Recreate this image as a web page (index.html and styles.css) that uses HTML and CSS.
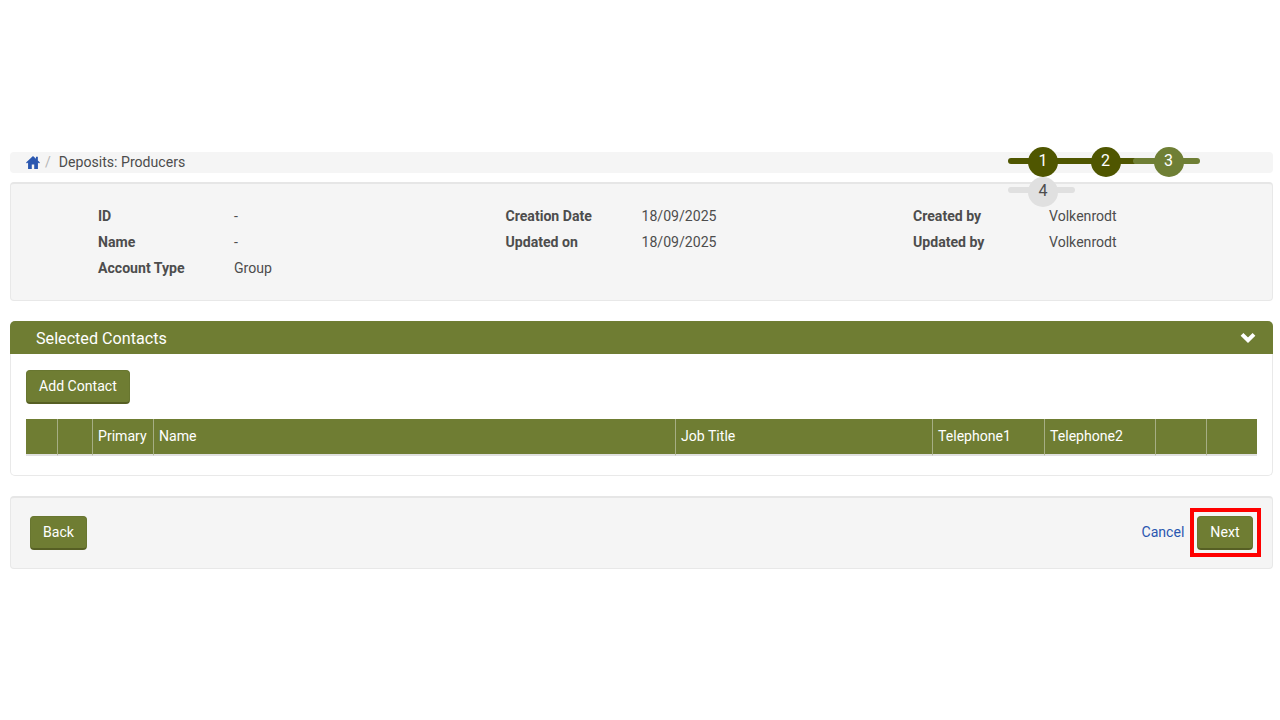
FILE: index.html
```html
<!DOCTYPE html>
<html lang="en">
<head>
<meta charset="utf-8">
<title>Deposits: Producers</title>
<link rel="stylesheet" href="styles.css">
</head>
<body>
<main class="page">
  <nav class="crumbs">
    <svg class="home" viewBox="0 0 16 15" width="14" height="13"><path d="M8 0 0 7.4 1 8.6 2.3 7.4V15h4.3V9.8h2.8V15h4.3V7.4L15 8.6l1-1.2-2.4-2.2V1h-2.2v2.2z"/></svg>
    <span class="sep">/</span>
    <span class="crumb">Deposits: Producers</span>
  </nav>
  <ol class="stepper">
    <li class="step done first"><span class="dot">1</span></li>
    <li class="step done second"><span class="dot">2</span></li>
    <li class="step active third"><span class="dot">3</span></li>
    <li class="step todo first"><span class="dot">4</span></li>
  </ol>

  <section class="well info">
    <dl class="info-col">
      <div class="row"><dt>ID</dt><dd>-</dd></div>
      <div class="row"><dt>Name</dt><dd>-</dd></div>
      <div class="row"><dt>Account Type</dt><dd>Group</dd></div>
    </dl>
    <dl class="info-col">
      <div class="row"><dt>Creation Date</dt><dd>18/09/2025</dd></div>
      <div class="row"><dt>Updated on</dt><dd>18/09/2025</dd></div>
    </dl>
    <dl class="info-col">
      <div class="row"><dt>Created by</dt><dd>Volkenrodt</dd></div>
      <div class="row"><dt>Updated by</dt><dd>Volkenrodt</dd></div>
    </dl>
  </section>

  <section class="panel">
    <header class="panel-head">
      <h2>Selected Contacts</h2>
      <svg class="chev" viewBox="0 0 16 11" width="16" height="11"><path d="M2 2.4 8 8.2 14 2.4" fill="none" stroke="#fff" stroke-width="4"/></svg>
    </header>
    <div class="panel-body">
      <button class="btn" type="button">Add Contact</button>
      <table class="grid">
        <colgroup>
          <col class="c1"><col class="c2"><col class="c3"><col class="c4"><col class="c5"><col class="c6"><col class="c7"><col class="c8"><col class="c9">
        </colgroup>
        <thead>
          <tr><th></th><th></th><th>Primary</th><th>Name</th><th>Job Title</th><th>Telephone1</th><th>Telephone2</th><th></th><th></th></tr>
        </thead>
      </table>
    </div>
  </section>

  <footer class="well actions">
    <button class="btn" type="button">Back</button>
    <div class="actions-right">
      <a class="cancel" href="#">Cancel</a>
      <button class="btn highlighted" type="button">Next</button>
    </div>
  </footer>
</main>
</body>
</html>
```
FILE: styles.css
```css
* { box-sizing: border-box; }
html, body { margin: 0; padding: 0; background: #fff; }
body {
  font-family: Roboto, "Liberation Sans", sans-serif;
  font-size: 14.1px;
  line-height: 20px;
  color: #4d4d4d;
}
.page {
  position: relative;
  width: 1280px;
  height: 720px;
  padding: 152px 7px 0 10px;
}
.crumbs {
  display: flex;
  align-items: center;
  height: 21px;
  padding: 0 0 1px 16px;
  background: #f5f5f5;
  border-radius: 4px;
}
.home { fill: #2a57b0; }
.sep { margin-left: 5px; color: #b5b5b5; }
.crumb { margin-left: 8px; }

.stepper {
  position: absolute;
  left: 1008px;
  top: 147px;
  width: 200px;
  margin: 0;
  padding: 0;
  list-style: none;
  display: flex;
  flex-wrap: wrap;
  z-index: 2;
}
.step {
  position: relative;
  height: 30px;
}
.step.first { width: 67px; padding-left: 20px; }
.step.second { width: 62px; padding-left: 15.5px; }
.step.third { width: 63px; padding-left: 16.5px; }
.step::before {
  content: "";
  position: absolute;
  left: 0;
  right: 0;
  top: 10.5px;
  height: 6px;
  border-radius: 3px;
  background: #4f5600;
}
.step.second::before { left: -8px; }
.step.active::before { left: -4px; background: #6f7f35; }
.step.todo::before { background: #e0e0e0; top: 10px; height: 5.5px; }
.dot {
  position: relative;
  display: block;
  width: 30px;
  height: 30px;
  border-radius: 50%;
  text-align: center;
  font-size: 16px;
  line-height: 28px;
  color: #fff;
}
.done .dot { background: #4f5600; }
.active .dot { background: #6f7f35; }
.todo .dot { background: #e0e0e0; color: #4d4d4d; }

.well {
  background: #f5f5f5;
  border: 1px solid #e8e8e8;
  border-top: 2px solid #e6e6e6;
  border-radius: 4px;
}
.info {
  display: flex;
  height: 119px;
  margin-top: 9px;
  padding: 19px 0 0 87px;
}
.info-col { flex: 0 0 407.5px; margin: 0; }
.row { display: flex; height: 26px; align-items: center; }
.row dt { width: 136px; font-weight: 700; }
.row dd { margin: 0; }

.panel {
  height: 155px;
  margin-top: 20px;
  border: 1px solid #e9e9e9;
  border-top: 0;
  border-radius: 5px;
}
.panel-head {
  display: flex;
  justify-content: space-between;
  align-items: center;
  height: 33px;
  margin: 0 -1px;
  padding: 2px 17px 0 26px;
  background: #6f7d33;
  border-radius: 5px 5px 0 0;
  color: #fff;
}
.panel-head h2 { margin: 0; font-size: 16.15px; font-weight: 400; }
.chev { margin-top: -3px; }
.panel-body { padding: 16px 15px 0; }

.btn {
  display: block;
  height: 33.5px;
  padding: 0 12px 1px;
  font: 400 14.1px/20px Roboto, "Liberation Sans", sans-serif;
  color: #fff;
  background: #6f7d33;
  border: 1px solid #687630;
  border-bottom: 2px solid #565f24;
  border-radius: 4px;
}
.grid {
  width: 1231px;
  margin-top: 15.5px;
  border-collapse: separate;
  border-spacing: 0;
  table-layout: fixed;
}
.c1 { width: 31px; }
.c2 { width: 35px; }
.c3 { width: 61px; }
.c4 { width: 522px; }
.c5 { width: 257px; }
.c6 { width: 112px; }
.c7 { width: 111px; }
.c8 { width: 51px; }
.c9 { width: 51px; }
.grid th {
  height: 37px;
  padding: 0 5px 1px;
  text-align: left;
  font-weight: 400;
  color: #fff;
  background: #6f7d33;
  border-left: 1px solid #a6ae84;
  border-bottom: 2px solid #e0e0e0;
}
.grid th:first-child { border-left: 0; }

.actions {
  display: flex;
  justify-content: space-between;
  align-items: center;
  height: 73px;
  margin-top: 20px;
  padding: 0 19.5px 0 19px;
}
.actions-right { display: flex; align-items: center; gap: 13px; }
.cancel { color: #2a57b0; text-decoration: none; margin-top: -3px; }
.highlighted { position: relative; }
.highlighted::after {
  content: "";
  position: absolute;
  inset: -9px -9.5px -9px -8.5px;
  border: 4px solid #f00;
}
```
